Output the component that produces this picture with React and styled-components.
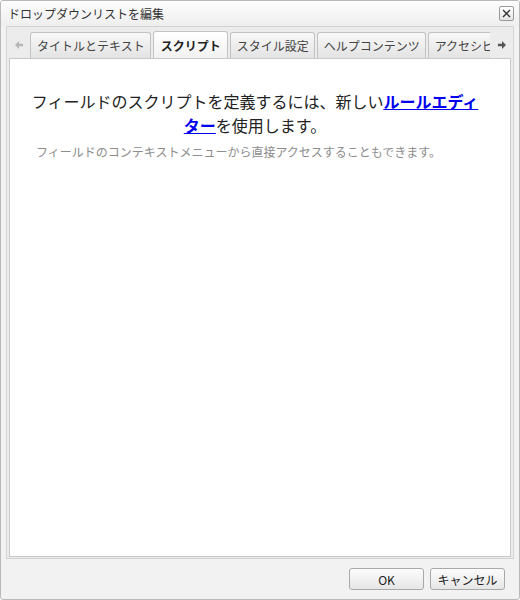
import React from 'react';
import styled, { createGlobalStyle, css } from 'styled-components';

const GlobalStyle = createGlobalStyle`
  html, body {
    margin: 0;
    padding: 0;
    background: #ffffff;
  }
  body {
    font-family: "Noto Sans CJK JP", "Noto Sans", sans-serif;
  }
`;

const Window = styled.div`
  box-sizing: border-box;
  width: 520px;
  height: 600px;
  display: flex;
  flex-direction: column;
  background: #f2f2f2;
  border: 1px solid #b9b9b9;
  border-radius: 3px;
  overflow: hidden;
`;

const TitleBar = styled.div`
  height: 25px;
  display: flex;
  align-items: center;
  justify-content: space-between;
  padding: 0 5px 0 7px;
  background: linear-gradient(#fdfdfd, #eeeeee);
  font-size: 12px;
  color: #333;
`;

const CloseButton = styled.div`
  box-sizing: border-box;
  width: 15px;
  height: 15px;
  display: flex;
  align-items: center;
  justify-content: center;
  border: 1px solid #9a9a9a;
  border-radius: 2px;
  background: linear-gradient(#ffffff, #e4e4e4);
`;

const Panel = styled.div`
  flex: 1;
  display: flex;
  flex-direction: column;
  margin: 0 5px 0 5px;
  padding: 4px 2px 1px 2px;
  border: 1px solid #d2d2d2;
  background: #ececec;
  min-height: 0;
`;

const TabStrip = styled.div`
  height: 27px;
  display: flex;
  align-items: flex-end;
  gap: 2px;
  overflow: hidden;
`;

const ScrollArrow = styled.div`
  flex: none;
  width: 19px;
  height: 26px;
  display: flex;
  align-items: center;
  justify-content: center;
  color: ${p => (p.$dim ? '#b5b5b5' : '#555')};
`;

const Tabs = styled.div`
  flex: 1;
  display: flex;
  align-items: flex-end;
  gap: 2px;
  overflow: hidden;
  min-width: 0;
`;

const Tab = styled.div`
  flex: none;
  box-sizing: border-box;
  height: 26px;
  display: flex;
  align-items: center;
  padding: 0 5px 0 6px;
  border: 1px solid #c3c3c3;
  border-bottom: none;
  border-radius: 3px 3px 0 0;
  background: linear-gradient(#f8f8f8, #e3e3e3);
  font-size: 12px;
  color: #444;
  white-space: nowrap;
  ${p =>
    p.$active &&
    css`
      height: 27px;
      background: linear-gradient(#ffffff, #f1f1f1);
      font-weight: bold;
      color: #222;
      padding: 0 6px 0 7px;
    `}
`;

const Content = styled.div`
  flex: 1;
  background: #ffffff;
  border: 1px solid #c9c9c9;
  padding: 30px 28px 0 18px;
`;

const Lead = styled.p`
  margin: 0;
  text-align: center;
  font-size: 16px;
  line-height: 24px;
  color: #222;
`;

const RuleLink = styled.a`
  color: #0000ee;
  font-weight: bold;
  text-decoration: underline;
`;

const Note = styled.p`
  margin: 7px 0 0 8px;
  font-size: 12px;
  line-height: 16px;
  color: #8c8c8c;
`;

const Footer = styled.div`
  height: 40px;
  display: flex;
  align-items: center;
  justify-content: flex-end;
  gap: 6px;
  padding-right: 14px;
`;

const Button = styled.div`
  box-sizing: border-box;
  width: 75px;
  height: 22px;
  display: flex;
  align-items: center;
  justify-content: center;
  border: 1px solid #a9a9a9;
  border-radius: 3px;
  background: linear-gradient(#fcfcfc, #e6e6e6);
  font-size: 12px;
  color: #222;
`;

const tabs = ['タイトルとテキスト', 'スクリプト', 'スタイル設定', 'ヘルプコンテンツ', 'アクセシビリティ'];

const Arrow = ({ left }) => (
  <svg width="10" height="10" viewBox="0 0 10 10">
    <path
      d={left ? 'M5 1 L1 5 L5 9 L5 6.3 L9 6.3 L9 3.7 L5 3.7 Z' : 'M5 1 L9 5 L5 9 L5 6.3 L1 6.3 L1 3.7 L5 3.7 Z'}
      fill="currentColor"
    />
  </svg>
);

export default function App() {
  return (
    <>
      <GlobalStyle />
      <Window>
        <TitleBar>
          <span>ドロップダウンリストを編集</span>
          <CloseButton>
            <svg width="9" height="9" viewBox="0 0 9 9">
              <path d="M1 1 L8 8 M8 1 L1 8" stroke="#333" strokeWidth="1.4" />
            </svg>
          </CloseButton>
        </TitleBar>
        <Panel>
          <TabStrip>
            <ScrollArrow $dim>
              <Arrow left />
            </ScrollArrow>
            <Tabs>
              {tabs.map((t, i) => (
                <Tab key={t} $active={i === 1}>
                  {t}
                </Tab>
              ))}
            </Tabs>
            <ScrollArrow>
              <Arrow />
            </ScrollArrow>
          </TabStrip>
          <Content>
            <Lead>
              フィールドのスクリプトを定義するには、新しい<RuleLink href="#">ルールエディター</RuleLink>を使用します。
            </Lead>
            <Note>フィールドのコンテキストメニューから直接アクセスすることもできます。</Note>
          </Content>
        </Panel>
        <Footer>
          <Button>OK</Button>
          <Button>キャンセル</Button>
        </Footer>
      </Window>
    </>
  );
}
